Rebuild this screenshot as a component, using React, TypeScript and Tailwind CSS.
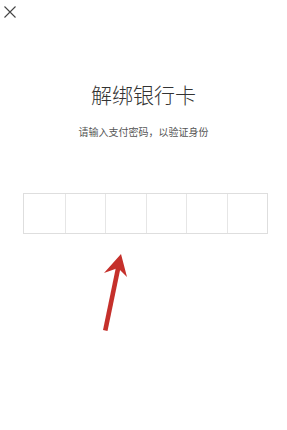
import React from 'react';

const cells = [0, 1, 2, 3, 4, 5];

export default function App() {
  return (
    <div
      className="w-[287px] h-[430px] bg-white overflow-hidden"
      style={{ fontFamily: '"Noto Sans CJK SC", "Noto Sans", sans-serif' }}
    >
      <div className="h-[24px] pt-[5px] pl-[3px]">
        <svg width="14" height="14" viewBox="0 0 14 14">
          <path d="M1.5 1.5 L12.5 12.5 M12.5 1.5 L1.5 12.5" stroke="#444" strokeWidth="1.1" fill="none" />
        </svg>
      </div>
      <h1 className="mt-[56px] h-[28px] leading-[28px] text-[21px] text-[#333] text-center font-light">
        解绑银行卡
      </h1>
      <p className="mt-[17px] h-[14px] leading-[14px] text-[10px] text-[#555] text-center">
        请输入支付密码，以验证身份
      </p>
      <div className="mt-[54px] ml-[23px] w-[245px] h-[41px] grid grid-cols-6 border border-[#dedede]">
        {cells.map((i) => (
          <div key={i} className={i === 0 ? '' : 'border-l border-[#e6e6e6]'} />
        ))}
      </div>
      <svg width="287" height="100" viewBox="0 250 287 100" className="block mt-[16px]">
        <path d="M103 330 L107.5 331 L120.5 268 L116 267 Z" fill="#c5302b" />
        <path d="M121 254 L104 273 L118 268 L127 277 Z" fill="#c5302b" />
      </svg>
    </div>
  );
}
